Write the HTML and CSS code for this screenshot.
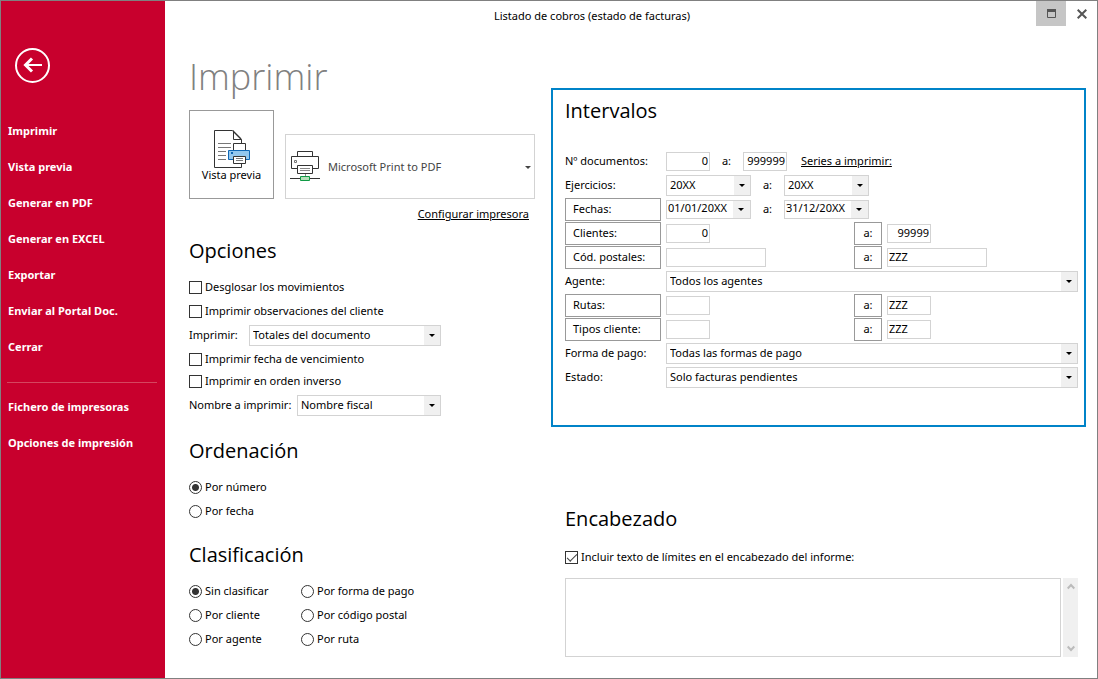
FILE: index.html
```html
<!DOCTYPE html>
<html lang="es">
<head>
<meta charset="utf-8">
<title>Listado de cobros (estado de facturas)</title>
<link rel="stylesheet" href="styles.css">
</head>
<body>
<div class="window">
  <aside class="sidebar">
    <button class="back" type="button" aria-label="Volver">
      <svg width="35" height="35" viewBox="0 0 35 35" fill="none" stroke="#fff">
        <circle cx="17.5" cy="17.5" r="16.5" stroke-width="2"/>
        <path d="M10 17H27" stroke-width="2"/>
        <path d="M17 10.500L10.500 17L17 23.500" stroke-width="3"/>
      </svg>
    </button>
    <nav class="menu">
      <a href="#">Imprimir</a>
      <a href="#">Vista previa</a>
      <a href="#">Generar en PDF</a>
      <a href="#">Generar en EXCEL</a>
      <a href="#">Exportar</a>
      <a href="#">Enviar al Portal Doc.</a>
      <a href="#">Cerrar</a>
      <hr class="menu-line">
      <a href="#">Fichero de impresoras</a>
      <a href="#">Opciones de impresión</a>
    </nav>
  </aside>

  <main class="main">
    <header class="titlebar">
      <div class="title">Listado de cobros (estado de facturas)</div>
      <button class="win-btn active" type="button" aria-label="Maximizar">
        <svg width="9" height="9" viewBox="0 0 9 9"><path d="M.5 .5H8.5V8.5H.5Z" fill="none" stroke="#555"/><path d="M0 0H9V3H0Z" fill="#555"/></svg>
      </button>
      <button class="win-btn" type="button" aria-label="Cerrar ventana">
        <svg width="10" height="10" viewBox="0 0 10 10"><path d="M.7 .7L9.3 9.3M9.3 .7L.7 9.3" stroke="#555" stroke-width="2"/></svg>
      </button>
    </header>

    <div class="content">
      <div class="col-left">
        <h1>Imprimir</h1>
        <div class="printer-row">
          <button class="preview" type="button">
            <svg width="41" height="38" viewBox="212 130 41 38" fill="none">
              <path d="M242.5 143V139.5L233.5 130.5H215.5V167.5H242.5V163" stroke="#333"/>
              <path d="M234.5 130.5V139.5H242.5" stroke="#333"/>
              <path d="M234 131L242 139" stroke="#333" stroke-width="1.4"/>
              <path d="M219 143.500H232M219 147.500H232M219 151.500H227M219 155.500H227M219 159.500H227" stroke="#777"/>
              <path d="M234.500 143.500H246.500V150.500H234.500Z" fill="#fff" stroke="#333"/>
              <path d="M229.500 150.500H250.500V159.500H229.500Z" fill="#92c7ee" stroke="#0f67b5"/>
              <path d="M232 152H234V154H232Z" fill="#0f67b5"/>
              <path d="M234.500 156.500H246.500V163.500H234.500Z" fill="#fff" stroke="#333"/>
              <path d="M237 158.500H244M237 160.500H244" stroke="#777"/>
            </svg>
            <span>Vista previa</span>
          </button>
          <div class="printer drop">
            <svg class="printer-icon" width="31" height="32" viewBox="290 150 31 32" fill="none">
              <path d="M297.500 157V151.500H312.500V157" stroke="#333"/>
              <path d="M297 168.500H291.500V156.500H318.500V168.500H313" stroke="#333"/>
              <path d="M294.500 160.500H296.500V162.500H294.500Z" stroke="#777"/>
              <path d="M297.500 165.500H312.500V173.500H297.500Z" fill="#fff" stroke="#333"/>
              <path d="M300 168.500H310M300 170.500H310M305.500 174V176" stroke="#888"/>
              <path d="M290 178.500H320" stroke="#333"/>
              <path d="M300.500 176.500H309.500V180.500H300.500Z" fill="#b5dfb9" stroke="#109a45"/>
            </svg>
            <select aria-label="Impresora"><option>Microsoft Print to PDF</option></select>
          </div>
        </div>
        <a class="configure" href="#">Configurar impresora</a>

        <section class="section">
          <h2>Opciones</h2>
          <div class="options">
            <label class="check"><input type="checkbox">Desglosar los movimientos</label>
            <label class="check"><input type="checkbox">Imprimir observaciones del cliente</label>
            <div class="option-select print-what"><label for="imp">Imprimir:</label><span class="drop"><select id="imp"><option>Totales del documento</option></select></span></div>
            <label class="check"><input type="checkbox">Imprimir fecha de vencimiento</label>
            <label class="check"><input type="checkbox">Imprimir en orden inverso</label>
            <div class="option-select print-name"><label for="nom">Nombre a imprimir:</label><span class="drop"><select id="nom"><option>Nombre fiscal</option></select></span></div>
          </div>
        </section>

        <section class="section">
          <h2>Ordenación</h2>
          <div class="radios">
            <label class="check"><input type="radio" name="orden" checked>Por número</label>
            <label class="check"><input type="radio" name="orden">Por fecha</label>
          </div>
        </section>

        <section class="section">
          <h2>Clasificación</h2>
          <div class="radios two">
            <label class="check"><input type="radio" name="clas" checked>Sin clasificar</label>
            <label class="check"><input type="radio" name="clas">Por forma de pago</label>
            <label class="check"><input type="radio" name="clas">Por cliente</label>
            <label class="check"><input type="radio" name="clas">Por código postal</label>
            <label class="check"><input type="radio" name="clas">Por agente</label>
            <label class="check"><input type="radio" name="clas">Por ruta</label>
          </div>
        </section>
      </div>

      <div class="col-right">
        <section class="panel">
          <h2>Intervalos</h2>
          <div class="ranges">
            <div class="range">
              <label class="name" for="doc1">Nº documentos:</label>
              <input class="field num" id="doc1" value="0">
              <label class="sep" for="doc2">a:</label>
              <input class="field num" id="doc2" value="999999">
              <a class="series" href="#">Series a imprimir:</a>
            </div>
            <div class="range">
              <label class="name" for="ej1">Ejercicios:</label>
              <span class="drop short"><select id="ej1"><option>20XX</option></select></span>
              <label class="sep" for="ej2">a:</label>
              <span class="drop short"><select id="ej2"><option>20XX</option></select></span>
            </div>
            <div class="range">
              <button class="name" type="button">Fechas:</button>
              <span class="date"><input aria-label="Fecha inicial" value="01/01/20XX"><button type="button" aria-label="Abrir calendario"></button></span>
              <label class="sep" for="fe2">a:</label>
              <span class="date"><input id="fe2" value="31/12/20XX"><button type="button" aria-label="Abrir calendario"></button></span>
            </div>
            <div class="range">
              <button class="name" type="button">Clientes:</button>
              <div class="from"><input class="field num" aria-label="Cliente inicial" value="0"></div>
              <button class="to" type="button">a:</button>
              <input class="field num" aria-label="Cliente final" value="99999">
            </div>
            <div class="range">
              <button class="name" type="button">Cód. postales:</button>
              <div class="from"><input class="field long" aria-label="Código postal inicial"></div>
              <button class="to" type="button">a:</button>
              <input class="field long" aria-label="Código postal final" value="ZZZ">
            </div>
            <div class="range">
              <label class="name" for="agente">Agente:</label>
              <span class="drop full"><select id="agente"><option>Todos los agentes</option></select></span>
            </div>
            <div class="range">
              <button class="name" type="button">Rutas:</button>
              <div class="from"><input class="field" aria-label="Ruta inicial"></div>
              <button class="to" type="button">a:</button>
              <input class="field" aria-label="Ruta final" value="ZZZ">
            </div>
            <div class="range">
              <button class="name" type="button">Tipos cliente:</button>
              <div class="from"><input class="field" aria-label="Tipo inicial"></div>
              <button class="to" type="button">a:</button>
              <input class="field" aria-label="Tipo final" value="ZZZ">
            </div>
            <div class="range">
              <label class="name" for="pago">Forma de pago:</label>
              <span class="drop full"><select id="pago"><option>Todas las formas de pago</option></select></span>
            </div>
            <div class="range">
              <label class="name" for="estado">Estado:</label>
              <span class="drop full"><select id="estado"><option>Solo facturas pendientes</option></select></span>
            </div>
          </div>
        </section>

        <section class="heading-text">
          <h2>Encabezado</h2>
          <label class="check"><input type="checkbox" checked>Incluir texto de límites en el encabezado del informe:</label>
          <div class="memo">
            <textarea aria-label="Texto del encabezado"></textarea>
            <div class="scroll">
              <button type="button" aria-label="Subir"><svg width="8" height="7" viewBox="0 0 8 7"><path d="M.7 5.500L4 2L7.300 5.500" fill="none" stroke="#bbb" stroke-width="2"/></svg></button>
              <button type="button" aria-label="Bajar"><svg width="8" height="7" viewBox="0 0 8 7"><path d="M.7 1.500L4 5L7.300 1.500" fill="none" stroke="#bbb" stroke-width="2"/></svg></button>
            </div>
          </div>
        </section>
      </div>
    </div>
  </main>
</div>
</body>
</html>
```

FILE: styles.css
```css
* { box-sizing: border-box; }

body {
  margin: 0;
  background: #fff;
  color: #000;
  font: 11px/16px "Noto Sans", "Open Sans", sans-serif;
}

button, input, select, textarea {
  font: inherit;
  color: inherit;
  margin: 0;
  border-radius: 0;
}

button { background: #fff; border: 0; padding: 0; }
svg { display: block; }
a { color: inherit; }

.window {
  display: grid;
  grid-template-columns: 164px 1fr;
  min-height: 100vh;
  border: 1px solid #808080;
}

/* Sidebar */
.sidebar { background: #c8002d; color: #fff; padding-top: 47px; }
.back { background: none; margin-left: 14px; display: block; }
.menu { display: flex; flex-direction: column; padding-top: 30px; }
.menu a {
  padding-left: 7px;
  line-height: 36px;
  font-weight: 700;
  text-decoration: none;
}
.menu-line {
  width: 150px;
  margin: 17px 0 6px 6px;
  border: 0;
  border-top: 1px solid #d5465f;
}

/* Title bar */
.titlebar { display: flex; gap: 1px; height: 25px; }
.title {
  flex: 1;
  padding: 0 16px 0 0;
  line-height: 30px;
  text-align: center;
}
.win-btn { width: 30px; display: grid; place-items: center; }
.win-btn.active { background: #c6c6c6; }

/* Content */
.content {
  display: grid;
  grid-template-columns: 346px 1fr;
  gap: 16px;
  padding: 0 11px 20px 24px;
}

h1, h2 { margin: 0; font-weight: 400; }
h1 {
  margin-top: 27px;
  height: 57px;
  font-family: "Open Sans", "Noto Sans", sans-serif;
  font-size: 36px;
  line-height: 48px;
  font-weight: 350;
  color: #808080;
}
h2 {
  font-family: "Open Sans", "Noto Sans", sans-serif;
  font-size: 20px;
  line-height: 32px;
}

.printer-row { display: flex; align-items: flex-end; gap: 11px; }
.preview {
  width: 85px;
  height: 89px;
  border: 1px solid #999;
  display: flex;
  flex-direction: column;
  align-items: center;
  padding-top: 19px;
  line-height: 14px;
}

.drop { position: relative; display: block; }
.drop select {
  display: block;
  width: 100%;
  height: 21px;
  padding: 0 18px 0 3px;
  border: 1px solid #d3d3d3;
  appearance: none;
  background: linear-gradient(#f0f0f0, #f0f0f0) right / 16px 100% no-repeat #fff;
}
.drop::after, .date button::after {
  content: "";
  position: absolute;
  right: 6px;
  top: 50%;
  margin-top: -1px;
  border: 3px solid transparent;
  border-top-color: #000;
  border-bottom: 0;
  pointer-events: none;
}
.printer { flex: 1; }
.printer select {
  height: 65px;
  padding-left: 42px;
  background: #fff;
  color: #444;
}
.printer.drop::after { right: 4px; border-top-color: #444; }
.printer-icon { position: absolute; left: 5px; top: 16px; }

.configure {
  display: block;
  width: fit-content;
  margin: 7px 6px 0 auto;
}

.section { margin-top: 16px; }
.configure + .section { margin-top: 13px; }
.section h2 { margin-bottom: 8px; }

.check { display: flex; align-items: center; gap: 3px; }
.check input {
  appearance: none;
  width: 13px;
  height: 13px;
  border: 1px solid #333;
  background: #fff;
}
.check input[type="radio"] { border-radius: 50%; }
.check input[type="radio"]:checked {
  background: radial-gradient(circle, #333 0 3px, #fff 4px);
}
.check input[type="checkbox"]:checked { display: grid; place-items: center; }
.check input[type="checkbox"]:checked::before {
  content: "";
  width: 9px;
  height: 4px;
  border: solid #444;
  border-width: 0 0 1px 1px;
  transform: translateY(-1px) rotate(-45deg);
}

.options { display: grid; grid-template-rows: 24px 24px 24px 24px 20px 28px; }
.option-select {
  display: grid;
  align-items: center;
  width: 252px;
}
.print-what { grid-template-columns: 60px 1fr; }
.print-name { grid-template-columns: 108px 1fr; }

.radios { display: grid; grid-auto-rows: 24px; }
.radios.two { grid-template-columns: 112px 1fr; }

/* Ranges panel */
.col-right { padding-top: 62px; }
.panel { border: 2px solid #0083c8; padding: 5px 6px 36px 12px; }
.ranges { display: grid; grid-auto-rows: 24px; margin-top: 22px; }
.range { display: flex; align-items: center; }
.name { width: 96px; margin-right: 5px; flex: none; }
button.name, .to { height: 23px; border: 1px solid #999; }
button.name { padding-left: 7px; text-align: left; }
.to { width: 28px; margin-right: 5px; }
.sep { width: 33px; text-align: center; }
.from { width: 188px; }
.field {
  display: block;
  width: 44px;
  height: 19px;
  padding: 0 1px 2px;
  border: 1px solid #d3d3d3;
}
.field.num { text-align: right; }
.field.long { width: 100px; }
.series { margin-left: 14px; }
.short { width: 85px; }
.full { flex: 1; }
.date { display: flex; width: 85px; height: 19px; border: 1px solid #d3d3d3; }
.date input { flex: 1; min-width: 0; border: 0; padding: 0 0 2px 1px; }
.date button { position: relative; width: 17px; background: #f0f0f0; }

/* Report heading */
.heading-text { margin-top: 76px; padding: 0 8px 0 14px; }
.heading-text .check { height: 24px; margin: 10px 0 9px; }
.memo { display: flex; gap: 2px; height: 79px; }
.memo textarea { flex: 1; resize: none; border: 1px solid #d3d3d3; padding: 2px; }
.scroll {
  width: 15px;
  padding: 5px 0;
  background: #f0f0f0;
  display: flex;
  flex-direction: column;
  align-items: center;
  justify-content: space-between;
}
.scroll button { background: none; }
```
